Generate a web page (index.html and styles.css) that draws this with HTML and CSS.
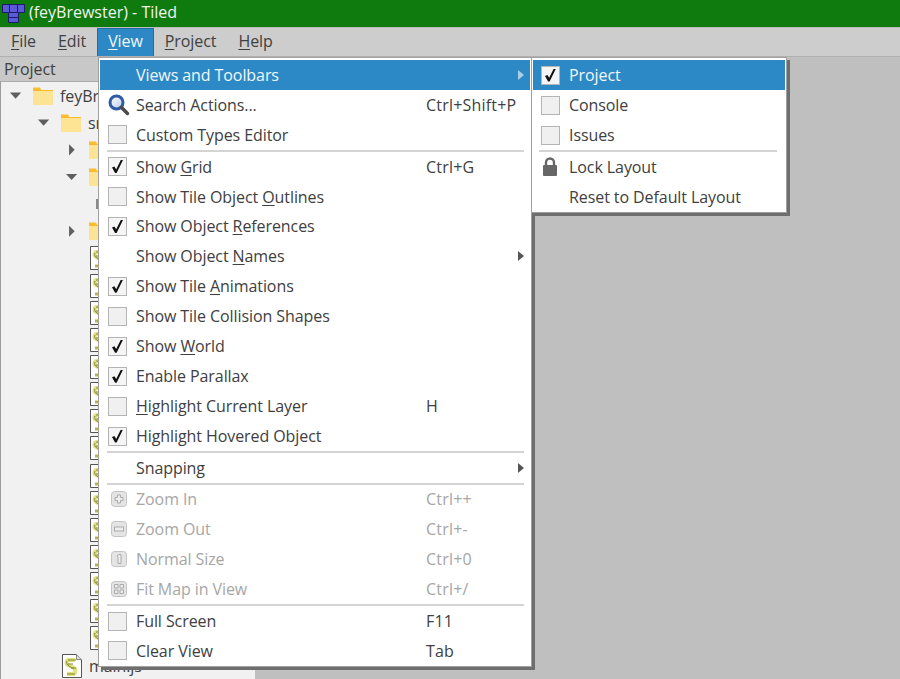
FILE: index.html
```html
<!DOCTYPE html>
<html lang="en">
<head>
<meta charset="utf-8">
<title>(feyBrewster) - Tiled</title>
<link rel="stylesheet" href="styles.css">
</head>
<body>
<svg class="defs" width="0" height="0">
  <defs>
    <symbol id="folder" viewBox="0 0 20 18">
      <path d="M0 1h7l1 2h12v15H0z" fill="#fbd65f"/>
      <path d="M0 4h20v14H0z" fill="#fde394"/>
      <path d="M0 3h20v1H0z" fill="#f7b92e"/>
      <path d="M0 0.5h7l1 2.5H0z" fill="#f9bd2f"/>
    </symbol>
    <symbol id="script" viewBox="0 0 20 24">
      <path d="M.5.5h14l5 5v18H.5z" fill="#fff" stroke="#555"/>
      <path d="M14.500.5v5h5" fill="#ddd" stroke="#888"/>
      <path d="M13 6H7C4 6 4 10 6 11l6 3c2 1 2 5-1 6H5" fill="none" stroke="#e3e07c" stroke-width="4"/>
      <path d="M6 6h8M6 10h5M9 14h5M5 20h8M5 7c-1 2 0 4 2 5l5 3" fill="none" stroke="#7c8a3a" stroke-width="1"/>
    </symbol>
  </defs>
</svg>
<header class="titlebar">
  <svg class="app-icon" viewBox="0 0 24 20" width="24" height="20">
    <path d="M.5 1.500h22v8h-6v10h-10v-10h-6z" fill="#5a5ad6" stroke="#1c1c66"/>
    <path d="M7.500 1.500v8M15.500 1.500v8M6.500 9.500h10M6.500 14.500h10" stroke="#1c1c66" fill="none"/>
  </svg>
  <span class="title">(feyBrewster) - Tiled</span>
</header>
<nav class="menubar">
  <span class="menu-top"><u>F</u>ile</span>
  <span class="menu-top"><u>E</u>dit</span>
  <span class="menu-top active"><u>V</u>iew</span>
  <span class="menu-top"><u>P</u>roject</span>
  <span class="menu-top"><u>H</u>elp</span>
</nav>
<main class="workspace">
  <aside class="panel">
    <div class="panel-title">Project</div>
    <ul class="tree">
      <li class="node depth0"><i class="arrow down"></i><svg class="folder"><use href="#folder"/></svg><span>feyBrewster</span></li>
      <li class="node depth1"><i class="arrow down"></i><svg class="folder"><use href="#folder"/></svg><span>src</span></li>
      <li class="node depth2"><i class="arrow right"></i><svg class="folder"><use href="#folder"/></svg></li>
      <li class="node depth2"><i class="arrow down"></i><svg class="folder"><use href="#folder"/></svg></li>
      <li class="node depth3"><i class="stub"></i></li>
      <li class="node depth2"><i class="arrow right"></i><svg class="folder"><use href="#folder"/></svg></li>
      <li class="node depth3"><svg class="file"><use href="#script"/></svg></li>
      <li class="node depth3"><svg class="file"><use href="#script"/></svg></li>
      <li class="node depth3"><svg class="file"><use href="#script"/></svg></li>
      <li class="node depth3"><svg class="file"><use href="#script"/></svg></li>
      <li class="node depth3"><svg class="file"><use href="#script"/></svg></li>
      <li class="node depth3"><svg class="file"><use href="#script"/></svg></li>
      <li class="node depth3"><svg class="file"><use href="#script"/></svg></li>
      <li class="node depth3"><svg class="file"><use href="#script"/></svg></li>
      <li class="node depth3"><svg class="file"><use href="#script"/></svg></li>
      <li class="node depth3"><svg class="file"><use href="#script"/></svg></li>
      <li class="node depth3"><svg class="file"><use href="#script"/></svg></li>
      <li class="node depth3"><svg class="file"><use href="#script"/></svg></li>
      <li class="node depth3"><svg class="file"><use href="#script"/></svg></li>
      <li class="node depth3"><svg class="file"><use href="#script"/></svg></li>
      <li class="node depth3"><svg class="file"><use href="#script"/></svg></li>
      <li class="node depth2b"><svg class="file"><use href="#script"/></svg><span>main.js</span></li>
    </ul>
  </aside>
</main>

<div class="popup main-menu">
  <div class="item selected"><span class="gutter"></span><span class="label">Views and Toolbars</span><i class="sub light"></i></div>
  <div class="item"><span class="gutter"><svg class="search" viewBox="0 0 22 22" width="22" height="22"><defs><linearGradient id="lens" x1="0" y1="0" x2="1" y2="1"><stop offset="0" stop-color="#ffffff"/><stop offset="1" stop-color="#b9cdea"/></linearGradient></defs><circle cx="8.500" cy="8.500" r="6.500" fill="url(#lens)" stroke="#2f5aa6" stroke-width="3"/><path d="M13.500 13.500l6 6" stroke="#4a4a4a" stroke-width="3.500" stroke-linecap="round"/></svg></span><span class="label">Search Actions...</span><span class="shortcut">Ctrl+Shift+P</span></div>
  <div class="item"><span class="gutter"><i class="check"></i></span><span class="label">Custom Types Editor</span></div>
  <hr class="sep">
  <div class="item"><span class="gutter"><i class="check on"></i></span><span class="label">Show <u>G</u>rid</span><span class="shortcut">Ctrl+G</span></div>
  <div class="item"><span class="gutter"><i class="check"></i></span><span class="label">Show Tile Object <u>O</u>utlines</span></div>
  <div class="item"><span class="gutter"><i class="check on"></i></span><span class="label">Show Object <u>R</u>eferences</span></div>
  <div class="item"><span class="gutter"></span><span class="label">Show Object <u>N</u>ames</span><i class="sub"></i></div>
  <div class="item"><span class="gutter"><i class="check on"></i></span><span class="label">Show Tile <u>A</u>nimations</span></div>
  <div class="item"><span class="gutter"><i class="check"></i></span><span class="label">Show Tile Collision Shapes</span></div>
  <div class="item"><span class="gutter"><i class="check on"></i></span><span class="label">Show <u>W</u>orld</span></div>
  <div class="item"><span class="gutter"><i class="check on"></i></span><span class="label">Enable Parallax</span></div>
  <div class="item"><span class="gutter"><i class="check"></i></span><span class="label"><u>H</u>ighlight Current Layer</span><span class="shortcut">H</span></div>
  <div class="item"><span class="gutter"><i class="check on"></i></span><span class="label">Highlight Hovered Object</span></div>
  <hr class="sep">
  <div class="item"><span class="gutter"></span><span class="label">Snapping</span><i class="sub"></i></div>
  <hr class="sep">
  <div class="item disabled"><span class="gutter"><svg class="zoom-icon" viewBox="0 0 16 16" width="16" height="16"><rect x=".5" y=".5" width="15" height="15" rx="3" fill="#e4e4e4" stroke="#c4c4c4"/><path d="M6.500 4h3v2.500h2.500v3H9.500V12h-3V9.500H4v-3h2.500z" fill="#eee" stroke="#aaa"/></svg></span><span class="label">Zoom In</span><span class="shortcut">Ctrl++</span></div>
  <div class="item disabled"><span class="gutter"><svg class="zoom-icon" viewBox="0 0 16 16" width="16" height="16"><rect x=".5" y=".5" width="15" height="15" rx="3" fill="#e4e4e4" stroke="#c4c4c4"/><rect x="3.500" y="6" width="9" height="4" fill="#eee" stroke="#aaa"/></svg></span><span class="label">Zoom Out</span><span class="shortcut">Ctrl+-</span></div>
  <div class="item disabled"><span class="gutter"><svg class="zoom-icon" viewBox="0 0 16 16" width="16" height="16"><rect x=".5" y=".5" width="15" height="15" rx="3" fill="#e4e4e4" stroke="#c4c4c4"/><path d="M6 5l2-1.500h2v9H7V6.500z" fill="#eee" stroke="#aaa"/></svg></span><span class="label">Normal Size</span><span class="shortcut">Ctrl+0</span></div>
  <div class="item disabled"><span class="gutter"><svg class="zoom-icon" viewBox="0 0 16 16" width="16" height="16"><rect x=".5" y=".5" width="15" height="15" rx="3" fill="#e4e4e4" stroke="#c4c4c4"/><path d="M3.500 3.500h3.500v3.500H3.500zM9 3.500h3.500v3.500H9zM3.500 9h3.500v3.500H3.500zM9 9h3.500v3.500H9z" fill="#eee" stroke="#aaa"/></svg></span><span class="label">Fit Map in View</span><span class="shortcut">Ctrl+/</span></div>
  <hr class="sep">
  <div class="item"><span class="gutter"><i class="check"></i></span><span class="label">Full Screen</span><span class="shortcut">F11</span></div>
  <div class="item"><span class="gutter"><i class="check"></i></span><span class="label">Clear View</span><span class="shortcut">Tab</span></div>
</div>

<div class="popup sub-menu">
  <div class="item selected"><span class="gutter"><i class="check on"></i></span><span class="label">Project</span></div>
  <div class="item"><span class="gutter"><i class="check"></i></span><span class="label">Console</span></div>
  <div class="item"><span class="gutter"><i class="check"></i></span><span class="label">Issues</span></div>
  <hr class="sep">
  <div class="item"><span class="gutter"><svg class="lock" viewBox="0 0 14 19" width="14" height="19"><path d="M3 9V5.500a4 4 0 0 1 8 0V9" fill="none" stroke="#666" stroke-width="2.400"/><rect x="0" y="8" width="14" height="11" rx="1" fill="#666"/></svg></span><span class="label">Lock Layout</span></div>
  <div class="item"><span class="gutter"></span><span class="label">Reset to Default Layout</span></div>
</div>
</body>
</html>
```

FILE: styles.css
```css
* { box-sizing: border-box; }
html, body { margin: 0; height: 679px; overflow: hidden; }
body {
  position: relative;
  display: flex;
  flex-direction: column;
  background: #bfbfbf;
  color: #404040;
  font-family: "Open Sans", "Noto Sans", sans-serif;
  font-size: 16px;
  letter-spacing: -0.08px;
}
.defs { position: absolute; }
u { text-underline-offset: 2px; text-decoration-thickness: 1px; }

.titlebar {
  height: 27px;
  flex: none;
  background: #0f7b0f;
  color: #f2f2f2;
  display: flex;
  align-items: center;
  padding: 0 0 2px 2px;
  gap: 3px;
}
.title { margin-top: -2px; letter-spacing: 0; }
.menubar {
  height: 30px;
  flex: none;
  background: #cdcdcd;
  display: flex;
  border-top: 1px solid #bdbdbd;
  border-bottom: 1px solid #b0b0b0;
}
.menu-top { padding: 2px 11px 0; }
.menu-top.active {
  background: #2d89c5;
  color: #f2f7fb;
  border: 1px solid #1f6fa5;
  border-bottom: 0;
  padding: 1px 10px 0;
}

.workspace { flex: 1; display: flex; }
.panel { width: 255px; display: flex; flex-direction: column; }
.panel-title { height: 24px; padding: 1px 0 0 4px; background: #c8c8c8; }
.tree {
  list-style: none;
  margin: 0;
  padding: 0;
  flex: 1;
  background: #f1f1f1;
  border-left: 1px solid #9b9b9b;
  border-top: 1px solid #aaa;
}
.node { height: 27.15px; display: flex; align-items: center; white-space: nowrap; }
.depth0 { padding-left: 9px; }
.depth1 { padding-left: 37px; }
.depth2 { padding-left: 65px; }
.depth2b { padding-left: 61px; }
.depth3 { padding-left: 89px; }
.arrow { width: 14px; height: 14px; flex: none; margin-right: 9px; display: block; }
.arrow.down { clip-path: polygon(0 28%, 80% 28%, 40% 72%); background: #5f5f5f; }
.arrow.right { clip-path: polygon(22% 10%, 62% 50%, 22% 90%); background: #5f5f5f; }
.folder { width: 20px; height: 18px; flex: none; margin-right: 7px; }
.file { width: 20px; height: 24px; flex: none; margin-right: 7px; }
.stub { width: 3px; height: 10px; margin-left: 6px; background: #8a8a8a; display: block; }

.popup {
  position: absolute;
  top: 57px;
  background: #fff;
  border: 1px solid #a0a0a0;
  box-shadow: 3px 3px 0 #6e6e6e;
  padding: 2px 1px;
}
.main-menu { left: 98px; width: 434px; height: 610px; }
.sub-menu { left: 531px; width: 256px; height: 156px; }
.item { height: 29.95px; display: flex; align-items: center; position: relative; }
.item.selected { background: #2d89c5; color: #f2f7fb; }
.item.disabled { color: #a6a6a6; }
.gutter { width: 36px; flex: none; display: flex; align-items: center; height: 100%; padding-left: 8px; }
.label { flex: 1; white-space: nowrap; }
.shortcut { position: absolute; left: 326px; white-space: nowrap; letter-spacing: 0.2px; }
.check {
  width: 19px;
  height: 19px;
  display: block;
  background: #f0f0f0;
  border: 1px solid #b4b4b4;
  position: relative;
}
.check.on { background: #f5f5f5; }
.check.on::after {
  content: "";
  position: absolute;
  left: 3px;
  top: 2px;
  width: 11px;
  height: 13px;
  background: #111;
  clip-path: polygon(0 58%, 22% 50%, 38% 72%, 80% 0, 100% 0, 42% 100%, 28% 100%);
}
.zoom-icon { margin-left: 3px; }
.lock { margin-left: 2px; }
.sub {
  position: absolute;
  right: 6px;
  top: 10px;
  width: 0;
  height: 0;
  border: 5px solid transparent;
  border-left: 6px solid #555;
  border-right: 0;
}
.sub.light { border-left-color: #a9cfe8; }
.sep {
  height: 1.8px;
  margin: 0 6px 0 7px;
  border: 0;
  background: #d4d4d4;
}
.sub-menu .sep { margin: 0 8px 0 6px; }
.sub-menu .item { height: 30px; }
```
